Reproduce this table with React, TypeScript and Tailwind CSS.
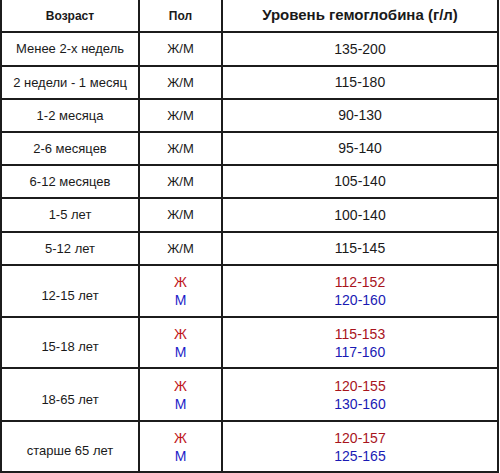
import React from 'react';

type Row = {
  age: string;
  h: string;
  single?: string;
  f?: string;
  m?: string;
};

const rows: Row[] = [
  { age: 'Менее 2-х недель', h: 'h-[34px]', single: '135-200' },
  { age: '2 недели - 1 месяц', h: 'h-[33px]', single: '115-180' },
  { age: '1-2 месяца', h: 'h-[33px]', single: '90-130' },
  { age: '2-6 месяцев', h: 'h-[33px]', single: '95-140' },
  { age: '6-12 месяцев', h: 'h-[33px]', single: '105-140' },
  { age: '1-5 лет', h: 'h-[34px]', single: '100-140' },
  { age: '5-12 лет', h: 'h-[33px]', single: '115-145' },
  { age: '12-15 лет', h: 'h-[52px]', f: '112-152', m: '120-160' },
  { age: '15-18 лет', h: 'h-[51px]', f: '115-153', m: '117-160' },
  { age: '18-65 лет', h: 'h-[53px]', f: '120-155', m: '130-160' },
  { age: 'старше 65 лет', h: 'h-[51px]', f: '120-157', m: '125-165' },
];

const cell = 'border-r-2 border-b-2 border-[#1c1c1c] flex justify-center';

export default function App() {
  return (
    <div className="w-[500px] h-[473px] bg-white overflow-hidden">
      <div className="w-[499px] border-l-2 border-[#1c1c1c] text-[#1a1a1a] font-['Liberation_Sans',sans-serif]">
        {/* header */}
        <div className="flex h-[33px] text-[12px] font-bold">
          <div className={`${cell} w-[138px] items-center`}>Возраст</div>
          <div className={`${cell} w-[83px] items-center`}>Пол</div>
          <div className={`${cell} w-[276px] items-center text-[15px]`}>Уровень гемоглобина (г/л)</div>
        </div>

        {rows.map((r, i) => (
          <div key={i} className={`flex ${r.h} text-[13px]`}>
            <div className={`${cell} w-[138px] ${r.single ? 'items-center' : 'items-end pb-[11px]'}`}>
              {r.age}
            </div>
            {r.single ? (
              <>
                <div className={`${cell} w-[83px] items-center`}>Ж/М</div>
                <div className={`${cell} w-[276px] items-center text-[14px]`}>{r.single}</div>
              </>
            ) : (
              <>
                <div className={`${cell} w-[83px] flex-col items-center leading-[18px] text-[14px]`}>
                  <span className="text-[#c0161c]">Ж</span>
                  <span className="text-[#1d1dc8]">М</span>
                </div>
                <div className={`${cell} w-[276px] flex-col items-center leading-[18px] text-[14px]`}>
                  <span className="text-[#a8141c]">{r.f}</span>
                  <span className="text-[#1a1ab4]">{r.m}</span>
                </div>
              </>
            )}
          </div>
        ))}
      </div>
    </div>
  );
}
